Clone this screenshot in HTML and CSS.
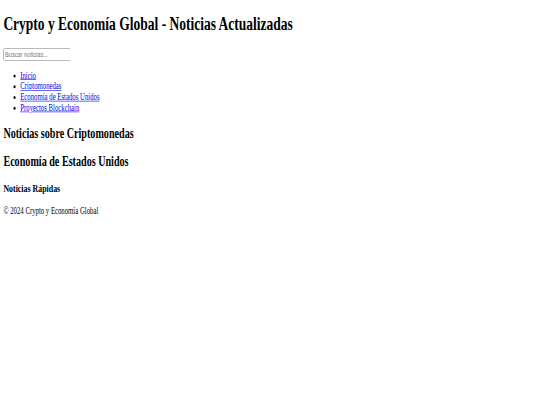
FILE: index.html
```html
<!DOCTYPE html>
<html lang="es">
<head>
<meta charset="utf-8">
<title>Crypto y Economía Global - Noticias Actualizadas</title>
<link rel="stylesheet" href="styles.css">
</head>
<body>
<div class="viewport">
  <div class="page">
    <div class="content">
      <header>
        <h1>Crypto y Economía Global - Noticias Actualizadas</h1>
        <input class="search" type="text" placeholder="Buscar noticias...">
        <nav>
          <ul>
            <li><a href="#">Inicio</a></li>
            <li><a href="#">Criptomonedas</a></li>
            <li><a href="#">Economía de Estados Unidos</a></li>
            <li><a href="#">Proyectos Blockchain</a></li>
          </ul>
        </nav>
      </header>
      <main>
        <section><h2>Noticias sobre Criptomonedas</h2></section>
        <section><h2>Economía de Estados Unidos</h2></section>
        <aside><h3>Noticias Rápidas</h3></aside>
      </main>
      <footer><p>© 2024 Crypto y Economía Global</p></footer>
    </div>
  </div>
</div>
</body>
</html>
```
FILE: styles.css
```css
html, body {
  margin: 0;
  padding: 0;
  background: #ffffff;
  overflow: hidden;
}
.viewport {
  width: 540px;
  height: 405px;
  overflow: hidden;
}
.page {
  display: flow-root;
  width: 1280px;
  height: 675px;
  transform-origin: 0 0;
  transform: scale(0.421875, 0.6);
  font-family: "Liberation Serif", "Times New Roman", serif;
  color: #000;
}
.content {
  margin: 8px;
}
.search {
  box-sizing: border-box;
  width: 159px;
  height: 21px;
  font-family: "Liberation Sans", Arial, sans-serif;
  font-size: 13.33px;
}
a {
  color: #0000ee;
}
```
